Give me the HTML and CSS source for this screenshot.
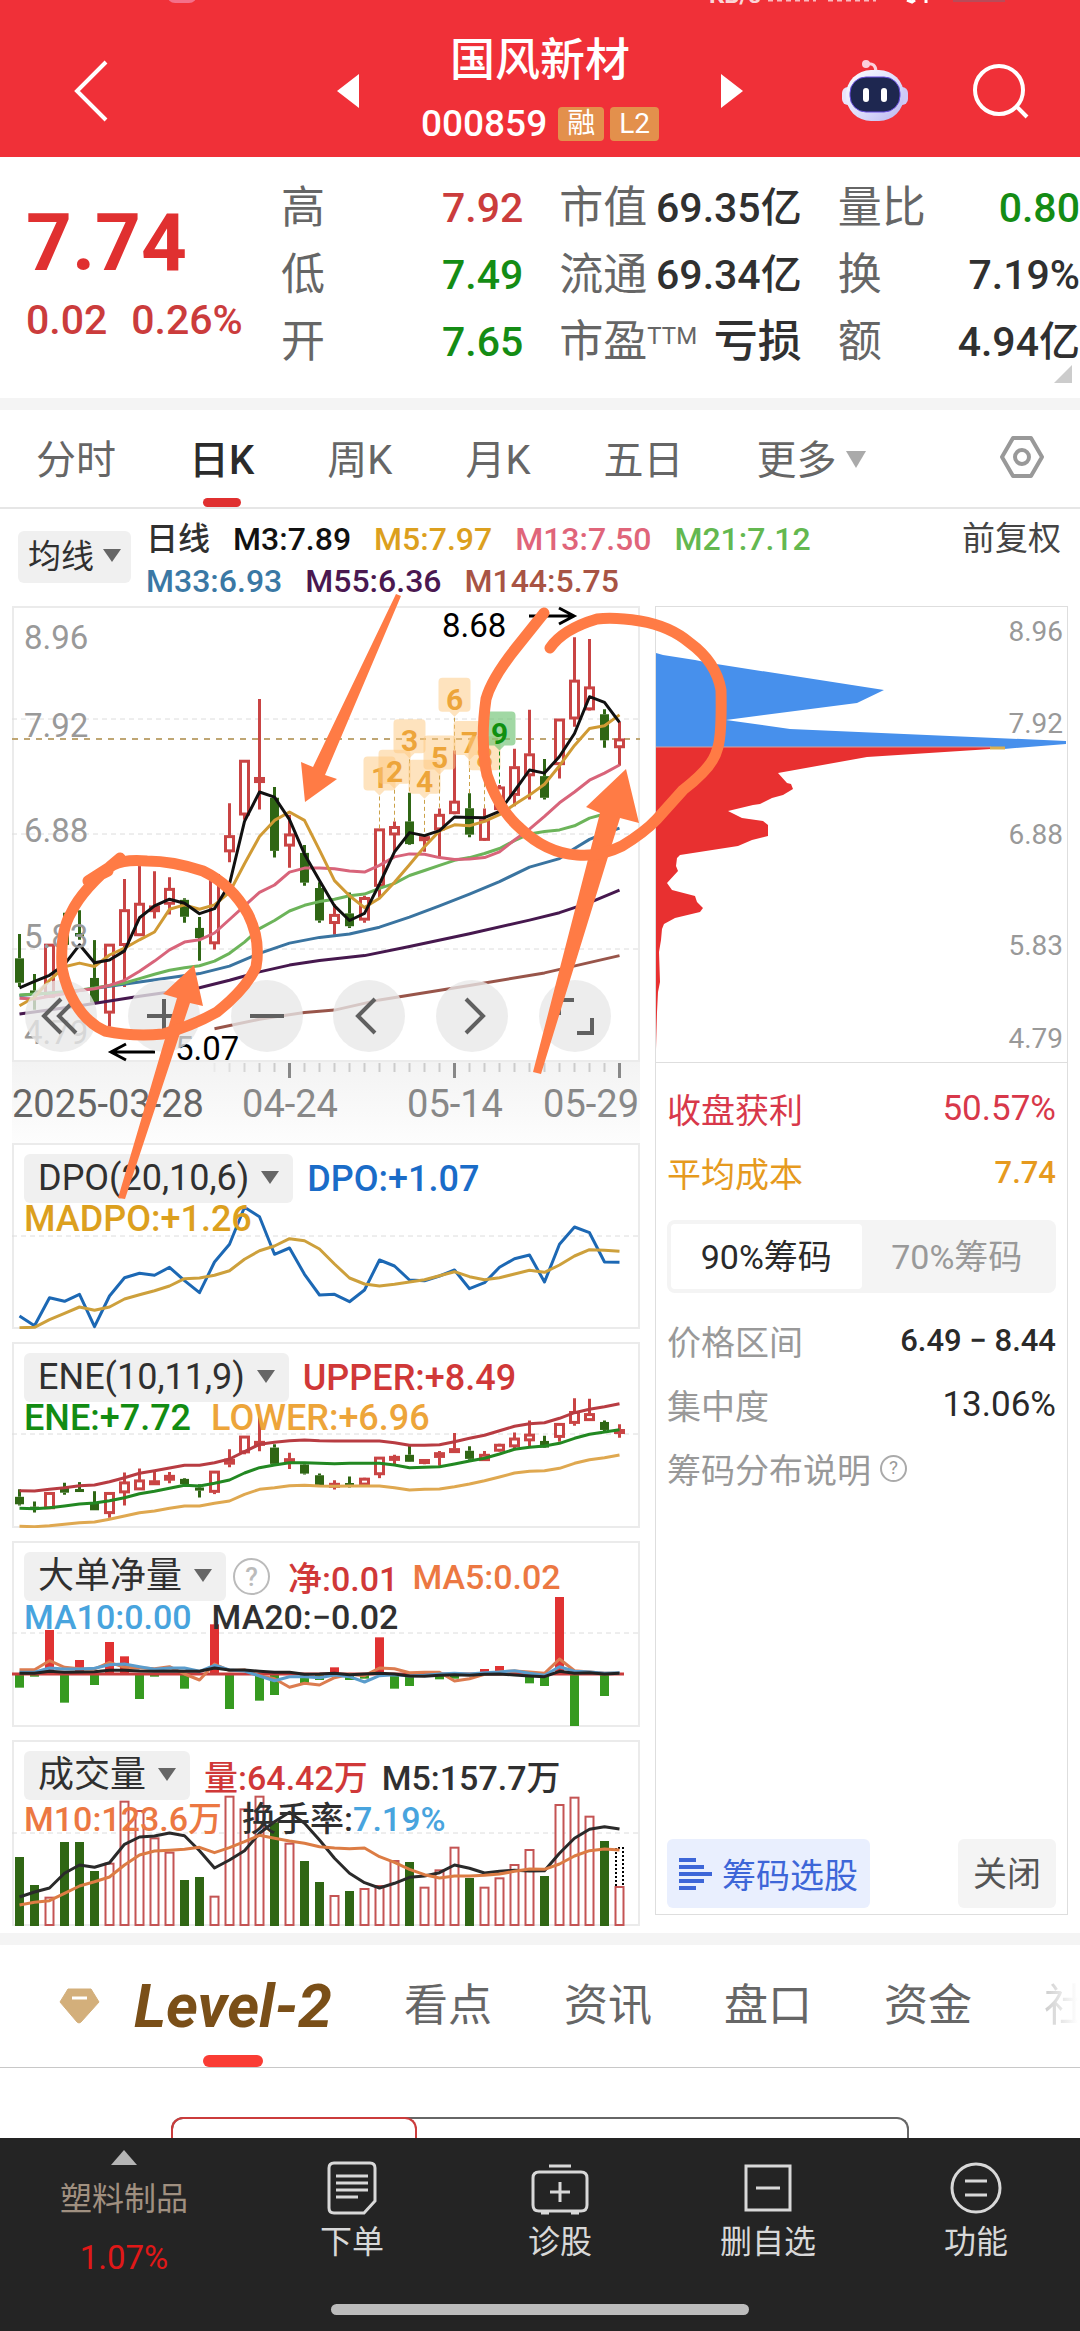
FILE: index.html
```html
<!DOCTYPE html>
<html lang="zh-CN">
<head>
<meta charset="utf-8">
<meta name="viewport" content="width=device-width, initial-scale=1">
<title>国风新材 000859</title>
<link rel="stylesheet" href="styles.css">
</head>
<body>
<header class="topbar">
  <svg class="statusbar" viewBox="0 0 1080 5" aria-hidden="true">
    <rect x="167" y="-14" width="30" height="17" rx="8" fill="#f4708a"/>
    <text x="709" y="3" font-size="24" font-weight="700" fill="#fbd5d8">KB/s</text>
    <path d="M768 0h48M828 0h48" stroke="#f9b9be" stroke-width="3" stroke-dasharray="5 4"/>
    <path d="M907 0l5 2 3-2M926 0v3" stroke="#fff" stroke-width="3" fill="none"/>
    <rect x="953" y="-10" width="52" height="12" fill="#b94b58"/>
  </svg>
  <div class="topbar-side topbar-left">
    <button class="icon-button" aria-label="返回"><svg width="36" height="64" viewBox="0 0 36 64"><path d="M33 3L4 32l29 29" fill="none" stroke="#fff" stroke-width="4"/></svg></button>
    <button class="icon-button" aria-label="上一只"><svg width="22" height="34" viewBox="0 0 22 34"><path d="M22 0v34L0 17z" fill="#fff"/></svg></button>
  </div>
  <div class="topbar-title">
    <h1>国风新材</h1>
    <div class="code-row"><span class="code">000859</span><span class="tag">融</span><span class="tag">L2</span></div>
  </div>
  <div class="topbar-side topbar-right">
    <button class="icon-button next" aria-label="下一只"><svg width="22" height="34" viewBox="0 0 22 34"><path d="M0 0v34l22-17z" fill="#fff"/></svg></button>
    <button class="icon-button" aria-label="智能助手">
      <svg width="66" height="62" viewBox="0 0 66 62">
        <defs><linearGradient id="shell" x1="0" y1="0" x2="1" y2="1"><stop offset="0" stop-color="#fff"/><stop offset=".55" stop-color="#dcdcfb"/><stop offset="1" stop-color="#b9b4ee"/></linearGradient></defs>
        <path d="M24 4q10-2 10 8" fill="none" stroke="#fcd0dc" stroke-width="3"/>
        <circle cx="24" cy="4" r="4" fill="#fcd0dc"/>
        <rect x="0" y="27" width="12" height="18" rx="6" fill="#e9e4fb"/>
        <rect x="54" y="27" width="12" height="18" rx="6" fill="#cfc9f6"/>
        <rect x="4" y="10" width="58" height="51" rx="25" fill="url(#shell)"/>
        <rect x="8" y="17" width="50" height="35" rx="16" fill="#1e2750" stroke="#6a4fe0" stroke-width="1"/>
        <rect x="21" y="28" width="6" height="14" rx="3" fill="#fff"/>
        <rect x="39" y="28" width="6" height="14" rx="3" fill="#fff"/>
      </svg>
    </button>
    <button class="icon-button" aria-label="搜索"><svg width="56" height="56" viewBox="0 0 56 56"><circle cx="26" cy="27" r="24" fill="none" stroke="#fff" stroke-width="4"/><path d="M43 43l11 11" stroke="#fff" stroke-width="4"/></svg></button>
  </div>
</header>

<main>
<section class="quote" aria-label="行情">
  <div class="price-block">
    <div class="price">7.74</div>
    <div class="change"><span>0.02</span><span>0.26%</span></div>
  </div>
  <dl class="stats">
    <div><dt>高</dt><dd class="up">7.92</dd></div>
    <div><dt>市值</dt><dd>69.35亿</dd></div>
    <div><dt>量比</dt><dd class="down">0.80</dd></div>
    <div><dt>低</dt><dd class="down">7.49</dd></div>
    <div><dt>流通</dt><dd>69.34亿</dd></div>
    <div><dt>换</dt><dd>7.19%</dd></div>
    <div><dt>开</dt><dd class="down">7.65</dd></div>
    <div><dt>市盈<small>TTM</small></dt><dd class="word">亏损</dd></div>
    <div><dt>额</dt><dd>4.94亿</dd></div>
  </dl>
  <span class="corner"></span>
</section>

<nav class="period-tabs" aria-label="周期">
  <button>分时</button>
  <button class="active">日K</button>
  <button>周K</button>
  <button>月K</button>
  <button>五日</button>
  <button>更多<i class="caret light"></i></button>
  <button class="settings" aria-label="设置"><svg width="44" height="42" viewBox="0 0 44 42"><path d="M13 2h18l11 19-11 19H13L2 21z" fill="none" stroke="#999" stroke-width="4" stroke-linejoin="round"/><circle cx="22" cy="21" r="7" fill="none" stroke="#999" stroke-width="4"/></svg></button>
</nav>

<section class="charts">
  <div class="ma-bar">
    <button class="chip small">均线<i class="caret"></i></button>
    <div class="ma-list">
      <div><span class="c-ink">日线</span><span class="c-black">M3:7.89</span><span class="c-gold">M5:7.97</span><span class="c-pink">M13:7.50</span><span class="c-lime">M21:7.12</span></div>
      <div><span class="c-steel">M33:6.93</span><span class="c-plum">M55:6.36</span><span class="c-brick">M144:5.75</span></div>
    </div>
    <button class="adjust">前复权</button>
  </div>

  <div class="chart-grid">
    <div class="chart-column">
      <div class="stack main-chart">
        <svg id="kline" viewBox="12 606 628 537" role="img" aria-label="日K线图">
          <defs>
            <linearGradient id="axis" x1="0" y1="0" x2="0" y2="1"><stop offset="0" stop-color="#f3f3f3"/><stop offset="1" stop-color="#fdfdfd"/></linearGradient>
          </defs>
          <rect x="12" y="1062" width="628" height="81" fill="url(#axis)"/>
          <rect x="13" y="607" width="626" height="454" fill="#fff" stroke="#ebebeb" stroke-width="2"/>
          <path class="grid" d="M12 719h628M12 834h628M12 949h628"/>
          <path d="M12 739h628" stroke="#bfa673" stroke-width="2" stroke-dasharray="6 6"/>
          <g id="candles"></g>
          <g id="averages"></g>
          <g id="marks"></g>
          <g class="y-label"><text x="24" y="649">8.96</text><text x="24" y="737">7.92</text><text x="24" y="842">6.88</text><text x="24" y="948">5.83</text><text x="24" y="1044">4.79</text></g>
          <g class="extreme"><text x="442" y="637">8.68</text><text x="175" y="1060">5.07</text><path d="M529 616h44M559 608l15 8-15 8M155 1052h-44M126 1044l-15 8 15 8"/></g>
          <g id="ticks"></g>
          <g class="dates"><text x="12" y="1117" fill="#666">2025-03-28</text><text x="290" y="1117" text-anchor="middle">04-24</text><text x="455" y="1117" text-anchor="middle">05-14</text><text x="639" y="1117" text-anchor="end">05-29</text></g>
        </svg>
        <div class="chart-tools">
          <button aria-label="最早"><svg viewBox="0 0 40 40"><path d="M20 3L3 20l17 17M35 3L18 20l17 17"/></svg></button>
          <button aria-label="放大"><svg viewBox="0 0 40 40"><path d="M3 20h34M20 3v34"/></svg></button>
          <button aria-label="缩小"><svg viewBox="0 0 40 40"><path d="M3 20h34"/></svg></button>
          <button aria-label="向前"><svg viewBox="0 0 40 40"><path d="M26 3L9 20l17 17"/></svg></button>
          <button aria-label="向后"><svg viewBox="0 0 40 40"><path d="M14 3l17 17-17 17"/></svg></button>
          <button aria-label="全屏"><svg viewBox="0 0 40 40"><path d="M4 19V4h15M37 22v15H22"/></svg></button>
        </div>
      </div>

      <div class="stack panel">
        <svg viewBox="12 1143 628 186" role="img" aria-label="DPO"><path class="grid" d="M12 1236h628"/><g id="dpo"></g></svg>
        <div class="legend">
          <div><button class="chip">DPO(20,10,6)<i class="caret"></i></button><span class="c-blue">DPO:+1.07</span></div>
          <div><span class="c-gold">MADPO:+1.26</span></div>
        </div>
      </div>
      <div class="stack panel">
        <svg viewBox="12 1342 628 186" role="img" aria-label="ENE"><path class="grid" d="M12 1434h628"/><g id="ene"></g></svg>
        <div class="legend">
          <div><button class="chip">ENE(10,11,9)<i class="caret"></i></button><span class="c-red">UPPER:+8.49</span></div>
          <div><span class="c-green">ENE:+7.72</span><span class="c-amber">LOWER:+6.96</span></div>
        </div>
      </div>
      <div class="stack panel">
        <svg viewBox="12 1541 628 186" role="img" aria-label="大单净量"><path class="grid" d="M12 1633h628"/><g id="flow"></g></svg>
        <div class="legend compact">
          <div><button class="chip">大单净量<i class="caret"></i></button><button class="help large" aria-label="说明">?</button><span class="c-red">净:0.01</span><span class="c-orange">MA5:0.02</span></div>
          <div><span class="c-sky">MA10:0.00</span><span class="c-ink">MA20:−0.02</span></div>
        </div>
      </div>
      <div class="stack panel">
        <svg viewBox="12 1740 628 186" role="img" aria-label="成交量"><path class="grid" d="M12 1833h628"/><g id="volume"></g></svg>
        <div class="legend compact">
          <div><button class="chip">成交量<i class="caret"></i></button><span class="c-red">量:64.42万</span><span class="c-ink">M5:157.7万</span></div>
          <div><span class="c-orange">M10:123.6万</span><span class="c-ink">换手率:<b class="c-sky">7.19%</b></span></div>
        </div>
      </div>
    </div>

    <aside class="chips-panel">
      <svg class="distribution" viewBox="656 606 411 455" role="img" aria-label="筹码分布">
        <path fill="#4790ec" d="M656 652l7 2 32 5 15 3 174 27-27 13-131 17 64 9 276 12v3l-62 5H656z"/>
        <path fill="#e83030" d="M656 746h335v2l-124 8-89 16 9 10 4 1 2 5-10 6-11 3-12 6-7 1-25 6 14 7 21 3 5 4v11l-16 4-14 6-58 9-3 3-1 8 2 5-11 12 5 7 23 6 2 6 6 6-3 4-25 6-11 6-2 5-1 11-2 12 1 30-2 10-1 20-1 37z"/>
        <path d="M656 746h335" stroke="#d8a09a" stroke-width="1"/>
        <path d="M990 747h15" stroke="#d9ae50" stroke-width="3"/>
        <g class="chip-label"><text x="1063" y="640">8.96</text><text x="1063" y="732">7.92</text><text x="1063" y="843">6.88</text><text x="1063" y="954">5.83</text><text x="1063" y="1047">4.79</text></g>
      </svg>
      <div class="chips-body">
        <dl class="facts">
          <div class="c-crimson"><dt>收盘获利</dt><dd>50.57%</dd></div>
          <div class="c-cost"><dt>平均成本</dt><dd class="range">7.74</dd></div>
        </dl>
        <div class="segmented"><button class="on">90%筹码</button><button>70%筹码</button></div>
        <dl class="facts muted">
          <div><dt>价格区间</dt><dd class="range">6.49 − 8.44</dd></div>
          <div><dt>集中度</dt><dd>13.06%</dd></div>
          <div><dt>筹码分布说明<button class="help" aria-label="说明">?</button></dt></div>
        </dl>
        <div class="chips-actions">
          <button class="pick"><svg width="33" height="34" viewBox="0 0 33 34"><path d="M0 3h17M0 10h25M0 17h33M0 24h25M0 31h17" stroke="#3d66d8" stroke-width="4"/></svg>筹码选股</button>
          <button class="close">关闭</button>
        </div>
      </div>
    </aside>
  </div>

  <svg class="annotation" viewBox="0 509 1080 1424" aria-hidden="true">
    <g fill="#ff7b45">
      <path d="M396 594l5 2-76 179 12 4-32 23-4-40 12 5z"/>
      <path d="M118 1198l7 1 65-196 13 3-9-41-31 29 14 4z"/>
      <path d="M533 1072l8 2 79-256 19 5-13-54-40 38 14 6z"/>
    </g>
    <g fill="none" stroke="#ff7b45" stroke-width="11" stroke-linecap="round" stroke-linejoin="round">
      <path d="M120 858Q82 889 71 913Q60 931 62 968Q66 988 75 1003Q87 1023 105 1031Q133 1037 163 1034Q190 1027 217 1012Q246 989 256 967Q261 940 248 914Q232 885 203 871Q173 861 147 861Q125 859 113 865L88 881L108 871"/>
      <path d="M544 613L520 643Q492 677 486 699Q480 742 487 775Q499 810 520 828Q546 853 577 855Q600 857 622 846Q645 832 657 819L683 790Q713 767 717 750Q722 738 721 690Q716 662 690 643Q670 626 640 621Q615 617 597 619Q563 629 550 648"/>
    </g>
  </svg>
</section>

<nav class="info-tabs" aria-label="资讯">
  <svg width="41" height="36" viewBox="0 0 41 36" aria-hidden="true"><path d="M9 1h23l8 13-18 20q-2 2-4 0L1 14z" fill="#d3af7b" stroke="#d3af7b" stroke-linejoin="round"/><path d="M13 10h15" stroke="#fff" stroke-width="3"/></svg>
  <a class="level active" href="#level2">Level-2</a>
  <a href="#view">看点</a>
  <a href="#news">资讯</a>
  <a href="#order">盘口</a>
  <a href="#funds">资金</a>
  <a class="fading" href="#community">社</a>
</nav>

<div class="sub-switch"><div class="switch-box"><div class="switch-on"></div></div></div>
</main>

<footer class="bottom-bar">
  <nav class="actions" aria-label="操作">
    <button class="sector"><svg width="26" height="15" viewBox="0 0 26 15"><path d="M13 0l13 15H0z" fill="#b5b5b5"/></svg><span>塑料制品</span><strong>1.07%</strong></button>
    <button><svg width="50" height="54" viewBox="0 0 50 54"><path d="M7 2h36q5 0 5 5v33L37 52H7q-5 0-5-5V7q0-5 5-5zM9 15h32M9 22h32M9 29h32M9 36h22"/></svg><span>下单</span></button>
    <button><svg width="58" height="54" viewBox="0 0 58 54"><path d="M18 5h22M8 11h42q6 0 6 6v27q0 6-6 6H8q-6 0-6-6V17q0-6 6-6zM29 21v20M19 31h20M10 52h8M40 52h8"/></svg><span>诊股</span></button>
    <button><svg width="48" height="54" viewBox="0 0 48 54"><path d="M2 5h44v44H2zM12 27h24"/></svg><span>删自选</span></button>
    <button><svg width="52" height="54" viewBox="0 0 52 54"><circle cx="26" cy="27" r="24"/><path d="M15 20h22M15 34h22"/></svg><span>功能</span></button>
  </nav>
  <div class="home-indicator"></div>
</footer>
<script src="charts.js"></script>
</body>
</html>
```

FILE: styles.css
```css
* { box-sizing: border-box; }
body { margin: 0; background: #fff; color: #303030; font-family: Roboto, "Noto Sans CJK SC", sans-serif; font-size: 32px; overflow-x: hidden; }
button { margin: 0; padding: 0; border: 0; background: none; color: inherit; font: inherit; white-space: nowrap; }
a { color: inherit; text-decoration: none; }
h1, dl, dd { margin: 0; }
svg { display: block; }

/* Header */
.topbar { position: relative; display: grid; grid-template-columns: 1fr 362px 1fr; height: 157px; background: #f03038; color: #fff; }
.statusbar { position: absolute; top: 0; left: 0; width: 100%; height: 5px; }
.topbar-side { display: flex; align-items: center; padding-top: 24px; }
.topbar-left { justify-content: space-between; padding-left: 73px; }
.topbar-right { gap: 65px; padding-right: 51px; }
.next { margin-right: auto; }
.topbar-title { display: flex; flex-direction: column; align-items: center; gap: 15px; padding-top: 30px; }
h1 { font-size: 45px; font-weight: 500; line-height: 62px; }
.code-row { display: flex; align-items: center; gap: 6px; height: 34px; }
.code { margin-right: 5px; font-size: 37px; font-weight: 500; line-height: 34px; }
.tag { padding: 0 9px; border-radius: 4px; background: #e3904c; font-size: 28px; line-height: 34px; }

/* Quote */
.quote { position: relative; display: flex; padding: 18px 0 22px; border-bottom: 12px solid #f4f4f4; box-sizing: content-box; }
.price-block { flex: 0 0 281px; padding: 28px 0 0 26px; color: #e03030; }
.price { font-size: 80px; font-weight: 700; line-height: 80px; }
.change { display: flex; gap: 24px; margin-top: 12px; color: #cb3c3c; font-size: 41px; font-weight: 500; line-height: 50px; }
.stats { flex: 1; display: grid; grid-template-columns: 1fr 1fr 1fr; column-gap: 36px; }
.stats div { display: flex; justify-content: space-between; height: 67px; line-height: 67px; white-space: nowrap; }
.stats dt { color: #666; font-size: 44px; }
.stats small { font-size: 24px; vertical-align: 13px; line-height: 24px; }
.stats dd { font-size: 41px; font-weight: 500; }
.stats .word { font-size: 44px; }
.up { color: #cb3c3c; }
.down { color: #148c14; }
.corner { position: absolute; right: 8px; bottom: 15px; border: 9px solid transparent; border-right-color: #ccc; border-bottom-color: #ccc; }

/* Period tabs */
.period-tabs { display: flex; align-items: stretch; gap: 73px; height: 99px; padding: 0 36px; border-bottom: 2px solid #e6e6e6; color: #666; font-size: 40px; }
.period-tabs button { position: relative; padding-bottom: 4px; }
.period-tabs .active { color: #2b2b2b; font-weight: 500; }
.active::after { content: ""; position: absolute; bottom: 0; left: 50%; width: 38px; height: 9px; margin-left: -19px; border-radius: 5px; background: #e03030; }
.settings { margin-left: auto; }
.caret { display: inline-block; margin-left: 12px; border: 9px solid transparent; border-top: 13px solid #666; border-bottom: 0; vertical-align: 6px; }
.caret.light { margin-left: 9px; border-width: 17px 10px 0; border-top-color: #aaa; }

/* Moving averages */
.charts { position: relative; }
.ma-bar { display: flex; height: 97px; padding: 9px 19px 0 18px; }
.chip { height: 49px; padding: 0 14px; border-radius: 6px; background: #f0f0f0; color: #303030; font-size: 36px; line-height: 49px; font-weight: 400; }
.chip.small { height: 52px; margin-top: 13px; padding: 0 10px; font-size: 33px; line-height: 52px; }
.chip.small .caret { margin-left: 9px; }
.ma-list { flex: 1; padding-left: 15px; font-weight: 500; line-height: 42px; }
.ma-list div { display: flex; gap: 23px; }
.adjust { align-self: flex-start; font-size: 33px; line-height: 42px; color: #444; }

/* Charts */
.chart-grid { display: grid; grid-template-columns: 628fr 413fr; column-gap: 15px; padding: 0 12px 7px; }
.chart-column { display: flex; flex-direction: column; gap: 13px; }
.stack { display: grid; }
.stack > * { grid-area: 1 / 1; min-width: 0; }
.stack > svg { width: 100%; }
.main-chart { margin-bottom: -13px; }
.panel { background: #fff; box-shadow: inset 0 0 0 2px #ebebeb; }
.legend { padding: 11px 0 0 12px; font-size: 36px; font-weight: 500; white-space: nowrap; }
.legend > div { display: flex; align-items: center; gap: 20px; height: 32px; }
.legend > div:first-child { gap: 14px; height: 49px; }
.legend b { font-weight: 500; }
.compact { font-size: 34px; }
.chart-tools { align-self: end; display: flex; justify-content: space-between; padding: 0 29px 91px 13px; }
.chart-tools button { width: 72px; height: 72px; padding: 16px; border-radius: 50%; background: rgba(232, 232, 232, .78); }
.chart-tools svg { width: 40px; height: 40px; fill: none; stroke: #606060; stroke-width: 4; }
.annotation { position: absolute; inset: 0; width: 100%; height: 100%; pointer-events: none; }
.grid { stroke: #dcdcdc; stroke-width: 1; stroke-dasharray: 5 4; }
.y-label { fill: #999; font-size: 33px; }
.extreme text { font-size: 33px; }
.extreme path { fill: none; stroke: #000; stroke-width: 3; }
.dates { fill: #888; font-size: 38px; }
.chip-label { fill: #999; font-size: 28px; text-anchor: end; }
.line { fill: none; stroke-width: 3; stroke-linejoin: round; }
.mark { font-size: 30px; font-weight: 700; text-anchor: middle; }

/* Chip distribution */
.chips-panel { display: flex; flex-direction: column; margin-bottom: 11px; border: 1px solid #dedede; background: #fff; }
.distribution { width: 100%; border-bottom: 1px solid #dedede; }
.chips-body { flex: 1; display: flex; flex-direction: column; padding: 13px 11px 6px; }
.facts > div { display: flex; align-items: center; justify-content: space-between; height: 64px; white-space: nowrap; }
.facts dt { display: flex; align-items: center; font-size: 34px; }
.facts dd { font-size: 35px; }
.facts .range { font-size: 31px; font-weight: 500; }
.muted { margin-top: 15px; color: #999; }
.muted dd { color: #2a2a2a; }
.segmented { display: grid; grid-template-columns: 1fr 1fr; height: 73px; margin-top: 16px; padding: 4px; border-radius: 8px; background: #f4f4f4; color: #999; font-size: 34px; }
.segmented button { padding-bottom: 4px; }
.segmented .on { border-radius: 4px; background: #fff; color: #2a2a2a; }
.help { width: 27px; height: 27px; margin-left: 9px; border: 2px solid #aaa; border-radius: 50%; color: #999; font-size: 19px; line-height: 22px; }
.help.large { width: 37px; height: 37px; margin: 0 4px 0 -7px; color: #bbb; border-color: #bbb; font-size: 26px; line-height: 32px; }
.chips-actions { display: flex; justify-content: space-between; margin-top: auto; font-size: 34px; }
.chips-actions button { height: 69px; padding-bottom: 4px; border-radius: 6px; }
.chips-actions .pick { display: flex; align-items: center; gap: 10px; padding: 0 12px; background: #e9effe; color: #3d66d8; }
.chips-actions .close { padding: 0 15px 4px; background: #f4f4f4; color: #555; }

/* Info tabs */
.info-tabs { display: flex; align-items: center; gap: 72px; height: 135px; padding-left: 59px; border-top: 12px solid #f4f4f4; border-bottom: 1px solid #c8c8c8; color: #666; font-size: 44px; white-space: nowrap; overflow: hidden; }
.info-tabs > * { flex-shrink: 0; }
.info-tabs a { position: relative; line-height: 122px; }
.info-tabs .level { margin-left: -38px; color: #7a4f18; font-size: 61px; font-weight: 700; font-style: italic; }
.info-tabs .active::after { width: 60px; height: 12px; margin-left: -30px; border-radius: 6px; background: #fa3c34; }
.fading { background: linear-gradient(90deg, #ccc 0, #fff 34px); background-clip: text; -webkit-background-clip: text; color: transparent; }
.sub-switch { padding: 49px 171px 0; }
.switch-box { height: 21px; border: 2px solid #666; border-bottom: 0; border-radius: 12px 12px 0 0; }
.switch-on { width: 246px; height: 21px; margin: -2px; border: 2px solid #cb3c3c; border-bottom: 0; border-radius: 12px 12px 0 0; }

/* Bottom bar */
.bottom-bar { position: relative; padding: 12px 0 16px; background: #242424; color: #d8d8d8; }
.actions { display: grid; grid-template-columns: 248fr 208fr 208fr 208fr 208fr; height: 128px; }
.actions button { display: flex; flex-direction: column; align-items: center; gap: 7px; padding-top: 11px; font-size: 32px; line-height: 40px; }
.actions svg { fill: none; stroke: #d8d8d8; stroke-width: 3; }
.actions .sector { gap: 14px; padding: 0; color: #a09080; }
.sector svg { stroke: none; }
.sector strong { margin-top: 5px; color: #e01818; font-size: 33px; font-weight: 400; }
.home-indicator { width: 418px; height: 11px; margin: 26px auto 0; border-radius: 6px; background: #bcbcbc; }

/* Series colours */
.c-ink { color: #303030; }
.c-black { color: #111; }
.c-gold { color: #dca01e; }
.c-pink { color: #e0657a; }
.c-lime { color: #64b850; }
.c-steel { color: #3a78a4; }
.c-plum { color: #4a1850; }
.c-brick { color: #a85444; }
.c-blue { color: #1a6cc8; }
.c-red { color: #d03838; }
.c-green { color: #128c12; }
.c-amber { color: #eda53a; }
.c-orange { color: #ec7842; }
.c-sky { color: #48a4de; }
.c-crimson { color: #d8384a; }
.c-cost { color: #e69a1e; }
```

FILE: charts.js
```js
const NS = 'http://www.w3.org/2000/svg';
const RED = '#c94444', GREEN = '#2f6614';
const X = i => 19.5 + 15 * i;
const priceY = v => 600 + v / 2.958;
const panelY = top => v => top + v / 3;

function add(parent, name, attrs, text) {
  const el = document.createElementNS(NS, name);
  for (const k in attrs) el.setAttribute(k, attrs[k]);
  if (text !== undefined) el.textContent = text;
  parent.appendChild(el);
  return el;
}
const byId = id => document.getElementById(id);

// values: one number per day, or [day, value] pairs
function line(parent, values, y, color) {
  const pts = values.map((v, i) => Array.isArray(v) ? v : [i, v]);
  add(parent, 'polyline', { class: 'line', stroke: color, points: pts.map(([i, v]) => X(i) + ',' + y(v).toFixed(1)).join(' ') });
}

// [rising, high, body top, body bottom, low]
const days = [
  [0,988,1060,1132,1145],[0,1106,1155,1168,1212],[1,1018,1018,1175,1175],[0,925,975,1020,1040],[0,918,985,995,1005],
  [0,1006,1118,1190,1190],[1,1018,1018,1222,1262],[1,825,916,1022,1145],[1,787,897,993,993],[1,802,905,922,942],
  [1,820,853,900,930],[0,882,887,937,955],[0,938,970,1000,1067],[1,812,812,1017,1034],[1,601,697,745,776],
  [1,474,474,636,650],[1,293,525,540,620],[0,553,585,742,762],[1,635,692,728,792],[0,725,748,836,845],
  [0,835,852,948,955],[1,900,930,957,990],[0,865,927,965,970],[1,875,880,947,955],[1,677,677,847,880],
  [1,655,670,695,745],[0,570,655,722,724],[1,695,700,712,745],[1,617,634,680,760],[1,445,595,632,634],
  [0,572,616,694,702],[1,617,650,711,713],[1,547,553,620,625],[1,440,493,578,610],[1,325,455,520,590],
  [0,470,521,585,590],[1,352,352,487,528],[1,110,237,352,375],[1,115,257,325,327],[0,323,338,415,437],[1,360,411,437,490]
];

function candles(parent, y) {
  days.forEach(([up, h, a, b, l], i) => {
    const x = X(i), color = up ? RED : GREEN, top = y(a), bottom = Math.max(y(b), y(a) + 3);
    add(parent, 'path', { d: `M${x} ${y(h)}V${top}M${x} ${bottom}V${Math.max(y(l), bottom)}`, stroke: color, 'stroke-width': 3 });
    if (up) add(parent, 'rect', { x: x - 4, y: top + 1, width: 8, height: Math.max(bottom - top - 2, 2), fill: bottom - top < 6 ? RED : '#fff', stroke: RED, 'stroke-width': 3 });
    else add(parent, 'rect', { x: x - 4.5, y: top, width: 9, height: bottom - top, fill: GREEN });
  });
}

candles(byId('candles'), priceY);
const avg = byId('averages');
line(avg, [[13,1268],[16,1240],[19,1220],[21,1213],[24,1183],[30,1140],[35,1103],[40,1052]], priceY, '#98554a');
line(avg, [[0,1225],[4,1200],[8,1172],[12,1147],[14,1125],[16,1100],[18,1080],[20,1066],[23,1052],[26,1025],[30,987],[34,947],[36,925],[38,895],[40,858]], priceY, '#46184e');
line(avg, [[0,1170],[4,1155],[8,1130],[12,1105],[14,1083],[16,1045],[18,1015],[20,998],[22,988],[24,968],[26,938],[28,905],[30,870],[32,833],[34,790],[36,765],[37,735],[38,708],[39,690],[40,675]], priceY, '#3a74a0');
line(avg, [[0,1168],[3,1160],[5,1148],[7,1133],[8,1120],[9,1107],[10,1095],[11,1088],[12,1082],[13,1068],[14,1045],[15,1012],[16,972],[17,948],[18,920],[19,903],[20,892],[21,885],[22,875],[23,870],[24,853],[25,838],[26,815],[27,800],[28,785],[29,770],[30,762],[31,750],[32,735],[33,712],[34,692],[35,685],[36,680],[37,668],[38,645],[39,633],[40,612]], priceY, '#6cb45a');
line(avg, [1178,1180,1172,1165,1155,1150,1140,1125,1098,1068,1035,1012,1005,985,945,905,865,843,805,793,793,795,802,805,785,760,751,752,762,768,766,762,745,710,678,640,600,568,533,512,488], priceY, '#d8647a');
line(avg, [1200,1175,1125,1085,1074,1084,1050,1030,1005,982,915,902,915,902,865,780,700,652,627,652,740,830,875,910,882,835,783,730,683,665,668,655,635,605,577,545,490,430,380,372,340], priceY, '#d09a34');
line(avg, [1147,1128,1110,1078,1020,1073,1065,1038,940,905,885,897,928,913,840,655,568,583,650,752,830,905,948,927,840,745,688,697,682,642,643,644,625,565,503,512,463,395,286,303,362], priceY, '#111');

// numbered signals: [day, label centre, stem end]
[[24,525,677],[25,505,655],[26,415,570],[27,535,695],[28,463,617],[29,292,445],[30,420,572],[31,465,617],[32,392,547]].forEach(([i, c, end], n) => {
  const g = byId('marks'), x = X(i), y = priceY(c), last = n === 8;
  const fill = last ? 'rgba(110,195,115,.65)' : 'rgba(253,200,125,.5)';
  add(g, 'path', { d: `M${x - 12} ${y - 21}h24q4 0 4 4v26q0 4-4 4h-7l-5 5-5-5h-7q-4 0-4-4v-26q0-4 4-4z`, fill });
  add(g, 'path', { d: `M${x} ${y + 19}V${priceY(end)}`, stroke: last ? '#128c12' : '#cba24a', 'stroke-dasharray': '4 3' });
  add(g, 'text', { class: 'mark', x, y: y + 11, fill: last ? '#109010' : '#eda53a' }, n + 1);
});

for (let i = 13; i <= 40; i++) {
  const major = i === 18 || i === 29 || i === 40;
  add(byId('ticks'), 'path', { d: `M${X(i)} 1063v${major ? 15 : 9}`, stroke: major ? '#888' : '#ccc', 'stroke-width': major ? 3 : 2, opacity: Math.min(1, (i - 12) / 4) });
}

const dpo = byId('dpo'), upper = panelY(1130), lower = panelY(1530);
line(dpo, [558,587,503,514,493,590,498,443,430,436,412,452,488,396,343,232,260,373,354,433,495,493,515,480,390,408,450,452,438,420,476,458,412,386,375,456,343,291,308,396,397], upper, '#1c68b4');
line(dpo, [593,592,569,550,531,541,531,507,494,482,468,446,444,436,422,388,362,348,326,332,357,402,444,462,468,463,456,449,437,425,440,449,443,432,421,427,405,378,359,361,364], upper, '#cda03c');

const ene = byId('ene');
candles(ene, v => 1417.3 + (v - 293) / 3 * .311);
line(ene, [1082,1083,1078,1073,1067,1065,1055,1043,1030,1022,1014,1006,1006,998,987,965,943,937,932,930,932,933,933,933,933,938,946,946,944,935,925,916,902,889,881,878,865,848,838,830,821], upper, '#b83c42');
line(ene, [1135,1136,1133,1128,1122,1119,1112,1103,1091,1084,1075,1066,1068,1060,1050,1029,1013,1005,998,998,1000,1001,1000,1000,1000,1005,1013,1012,1010,1002,993,985,972,958,952,948,940,925,913,906,899], upper, '#228822');
line(ene, [1189,1190,1187,1183,1178,1176,1168,1158,1148,1143,1135,1128,1128,1120,1113,1093,1078,1073,1067,1066,1068,1069,1068,1068,1068,1073,1080,1078,1077,1070,1062,1052,1041,1029,1024,1022,1015,1000,989,983,975], upper, '#dfa850');

const flow = byId('flow');
[473,440,300,518,390,465,336,379,507,440,430,476,433,283,537,433,512,495,433,462,450,412,450,446,322,476,468,433,448,446,433,417,408,422,460,468,201,588,433,498,430].forEach((v, i) => {
  add(flow, 'rect', { x: X(i) - 4.5, y: lower(Math.min(v, 433)), width: 9, height: Math.abs(v - 433) / 3, fill: v < 433 ? '#e03232' : '#369a20' });
});
add(flow, 'path', { d: 'M12 1674h612', stroke: '#c93c3c', 'stroke-width': 3 });
line(flow, [419,419,392,412,416,417,397,412,413,416,410,432,450,402,422,420,437,446,472,460,465,443,433,437,414,416,428,427,427,453,446,433,425,423,426,430,387,422,426,430,430], lower, '#dc7c50');
line(flow, [427,427,414,417,417,415,404,402,410,418,414,414,424,406,420,423,438,452,440,440,443,435,440,456,437,434,438,436,432,430,432,428,426,422,430,436,410,424,426,430,428], lower, '#5a9ccc');
line(flow, [430,430,424,427,426,425,421,421,423,424,423,424,424,414,420,420,424,427,427,433,432,430,434,432,430,432,438,439,436,434,436,433,432,435,438,440,424,430,428,432,430], lower, '#222');

const volume = byId('volume');
[981,1065,1100,936,936,1023,998,812,840,922,965,1050,1041,1097,797,835,797,877,938,993,1056,1095,1083,1074,1065,990,996,1070,1018,950,1044,1070,1042,1002,957,1038,822,800,857,933,1068].forEach((v, i) => {
  const y = lower(v), h = 1926 - y;
  if (days[i][0]) add(volume, 'rect', { x: X(i) - 4, y: y + 1, width: 8, height: h - 2, fill: '#fff', stroke: '#c45454', 'stroke-width': 2 });
  else add(volume, 'rect', { x: X(i) - 4.5, y, width: 9, height: h, fill: GREEN });
});
add(volume, 'path', { d: 'M616 1886v-38h7v38', fill: 'none', stroke: '#000', 'stroke-width': 2, 'stroke-dasharray': '2 2' });
line(volume, [1101,1086,1074,1030,1005,1012,998,943,921,918,909,917,962,1014,990,962,910,875,847,880,930,985,1030,1058,1074,1060,1042,1038,1028,1005,1015,1029,1024,1021,1023,1022,970,925,898,890,897], lower, '#2a2a2a');
line(volume, [1125,1117,1112,1090,1068,1055,1041,1005,975,963,961,958,952,968,953,935,916,925,933,940,950,954,956,954,980,997,1018,1034,1044,1038,1038,1036,1032,1024,1017,1018,1002,978,962,957,960], lower, '#dc7c44');
```
